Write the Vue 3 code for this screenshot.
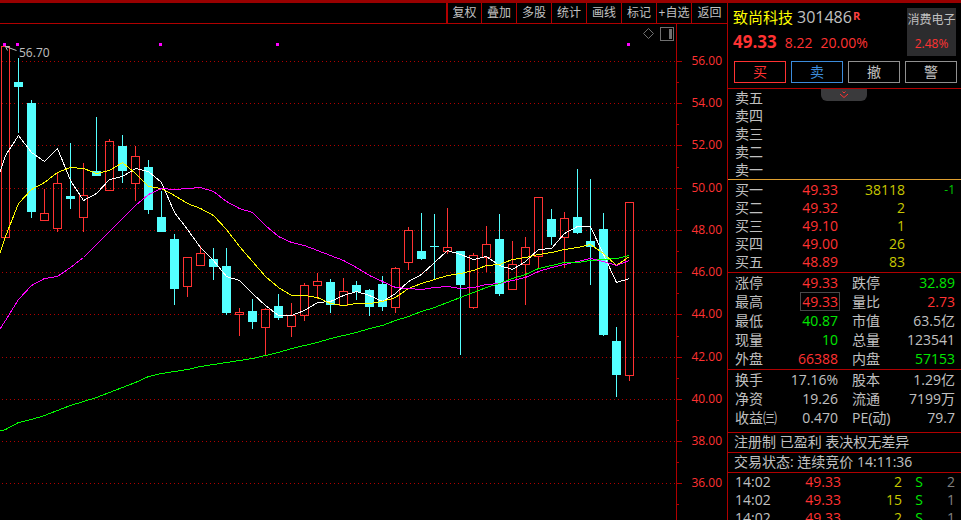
<script setup>
const tools = ['复权', '叠加', '多股', '统计', '画线', '标记', '+自选', '返回']

const majorTicks = [
  [61, '56.00'], [103, '54.00'], [145, '52.00'], [188, '50.00'], [230, '48.00'], [272, '46.00'],
  [314, '44.00'], [357, '42.00'], [399, '40.00'], [441, '38.00'], [483, '36.00'],
]
const minorTicks = [82, 124, 167, 209, 251, 293, 336, 378, 420, 462, 504]

// Each bar: direction, then the rows of high, body top, body bottom and low.
const bars = [
  ['u', 46, 46, 238, 238], ['d', 58, 82, 87, 133], ['d', 100, 103, 212, 218], ['u', 189, 213, 221, 221],
  ['u', 172, 183, 229, 232], ['d', 143, 196, 199, 209], ['u', 163, 195, 218, 232], ['d', 117, 171, 176, 176],
  ['u', 139, 141, 191, 191], ['d', 135, 146, 171, 183], ['u', 146, 156, 184, 201], ['d', 160, 167, 210, 214],
  ['d', 191, 217, 232, 232], ['d', 234, 239, 289, 305], ['u', 257, 257, 287, 297], ['u', 246, 253, 266, 266],
  ['d', 248, 259, 267, 280], ['d', 248, 266, 313, 315], ['u', 308, 312, 315, 336], ['d', 299, 311, 322, 329],
  ['u', 308, 309, 328, 355], ['d', 294, 306, 318, 320], ['u', 303, 315, 327, 337], ['u', 283, 285, 316, 321],
  ['u', 273, 281, 286, 299], ['d', 279, 282, 305, 313], ['u', 278, 291, 306, 306], ['d', 281, 285, 292, 300],
  ['d', 289, 290, 307, 316], ['d', 276, 284, 307, 311], ['u', 267, 268, 308, 313], ['u', 227, 230, 263, 270],
  ['d', 213, 251, 259, 260], ['d', 214, 246, 247, 279], ['u', 208, 247, 252, 254], ['d', 251, 251, 285, 355],
  ['u', 253, 255, 308, 309], ['u', 226, 244, 258, 272], ['d', 214, 239, 294, 296], ['u', 241, 264, 290, 290],
  ['u', 237, 247, 265, 305], ['u', 197, 197, 257, 269], ['d', 209, 219, 237, 245], ['u', 212, 218, 238, 268],
  ['d', 169, 217, 233, 234], ['d', 179, 241, 247, 285], ['d', 213, 229, 335, 336], ['d', 327, 341, 375, 397],
  ['u', 202, 202, 376, 381],
].map(([dir, high, top, bottom, low], i) => ({ up: dir === 'u', high, top, bottom, low, x: 5 + 13 * i }))

const markers = [3, 16, 159, 276, 627]

const series = (first, ys) => [`0,${first}`, ...ys.map((y, i) => `${5.5 + 13 * i},${y + 0.5}`)].join(' ')

const averages = [
  { name: 'ma5', points: series(172, [155, 135, 152, 161, 148, 180, 200, 193, 179, 176, 168, 171, 182, 212, 229, 247, 260, 276, 280, 293, 305, 315, 315, 310, 302, 301, 295, 291, 295, 301, 293, 281, 274, 262, 250, 254, 259, 256, 265, 269, 261, 249, 248, 233, 226, 226, 254, 282, 278]) },
  { name: 'ma10', points: series(253, [236, 203, 189, 182, 172, 167, 168, 173, 170, 162, 173, 186, 188, 195, 203, 208, 215, 229, 246, 261, 276, 287, 295, 295, 297, 303, 305, 303, 303, 301, 297, 288, 283, 279, 275, 273, 270, 265, 264, 259, 257, 254, 252, 249, 247, 244, 253, 265, 256]) },
  { name: 'ma20', points: series(329, [320, 299, 285, 278, 276, 267, 257, 244, 231, 218, 205, 194, 188, 189, 188, 187, 191, 201, 208, 212, 225, 236, 242, 245, 250, 255, 260, 267, 275, 281, 287, 288, 289, 287, 286, 288, 287, 284, 283, 280, 277, 271, 267, 264, 261, 258, 261, 265, 260]) },
  { name: 'ma60', points: series(431, [429, 422, 419, 415, 410, 405, 401, 397, 392, 387, 382, 376, 373, 371, 369, 366, 364, 362, 360, 358, 355, 352, 348, 345, 342, 338, 335, 332, 328, 325, 320, 316, 311, 307, 302, 297, 292, 287, 283, 278, 274, 268, 265, 262, 262, 260, 259, 258, 255]) },
]

const actions = [
  { text: '买', tone: 'buy' },
  { text: '卖', tone: 'sell' },
  { text: '撤', tone: 'plain' },
  { text: '警', tone: 'plain' },
]

const asks = ['卖五', '卖四', '卖三', '卖二', '卖一']
const bids = [
  ['买一', '49.33', '38118', '-1'],
  ['买二', '49.32', '2', ''],
  ['买三', '49.10', '1', ''],
  ['买四', '49.00', '26', ''],
  ['买五', '48.89', '83', ''],
]

const quotes = [
  ['涨停', '49.33', 'red'], ['跌停', '32.89', 'green'],
  ['最高', '49.33', 'red boxed'], ['量比', '2.73', 'red'],
  ['最低', '40.87', 'green'], ['市值', '63.5亿', ''],
  ['现量', '10', 'green'], ['总量', '123541', ''],
  ['外盘', '66388', 'red'], ['内盘', '57153', 'green'],
]
const basics = [
  ['换手', '17.16%'], ['股本', '1.29亿'],
  ['净资', '19.26'], ['流通', '7199万'],
  ['收益㈢', '0.470'], ['PE(动)', '79.7'],
]
const trades = [
  ['14:02', '49.33', '2', 'S', '2'],
  ['14:02', '49.33', '15', 'S', '1'],
  ['14:02', '49.33', '2', 'S', '1'],
]
</script>

<template>
  <div class="terminal">
    <main class="left">
      <nav class="toolbar">
        <button v-for="t in tools" :key="t" type="button">{{ t }}</button>
      </nav>
      <svg class="chart" viewBox="0 24 727 496" role="img" aria-label="K线图">
        <g class="grid">
          <line v-for="[y] in majorTicks" :key="y" x1="2" x2="676" :y1="y + 0.5" :y2="y + 0.5" />
        </g>
        <g class="axis">
          <rect x="676" y="24" width="1" height="496" />
          <rect v-for="[y] in majorTicks" :key="y" x="677" :y="y" width="5" height="1" />
          <rect v-for="y in minorTicks" :key="y" x="677" :y="y" width="2" height="1" />
        </g>
        <g class="scale">
          <text v-for="[y, label] in majorTicks" :key="y" x="722" :y="y + 4">{{ label }}</text>
        </g>
        <g v-for="b in bars" :key="b.x" :class="b.up ? 'rise' : 'fall'">
          <template v-if="b.up">
            <rect v-if="b.top > b.high" class="wick" :x="b.x" :y="b.high" width="1" :height="b.top - b.high" />
            <rect v-if="b.low > b.bottom" class="wick" :x="b.x" :y="b.bottom" width="1" :height="b.low - b.bottom" />
            <rect class="body" :x="b.x - 3.5" :y="b.top + 0.5" width="8" :height="b.bottom - b.top - 1" />
          </template>
          <template v-else>
            <rect :x="b.x" :y="b.high" width="1" :height="b.low - b.high" />
            <rect :x="b.x - 4" :y="b.top" width="9" :height="b.bottom - b.top" />
          </template>
        </g>
        <polyline v-for="a in averages" :key="a.name" class="average" :class="a.name" :points="a.points" />
        <g class="peak">
          <path d="M16.5 50.5L5.5 46.500M5.500 46.500h4M5.500 46.500l2 4" />
          <text x="19" y="57">56.70</text>
        </g>
        <rect v-for="x in markers" :key="x" class="marker" :x="x" y="43" width="3" height="3" />
        <g class="glyphs">
          <path d="M648.5 28.5l5 5-5 5-5-5z" />
          <rect class="frame" x="660.5" y="27.5" width="13" height="13" />
          <rect class="fill" x="669" y="29" width="3" height="10" />
        </g>
      </svg>
    </main>

    <aside class="panel">
      <header class="head">
        <div class="summary">
          <div>
            <h1><span class="name">致尚科技</span><span class="code">301486</span><sup>R</sup></h1>
            <p class="price"><strong>49.33</strong><span>8.22</span><span>20.00%</span></p>
          </div>
          <a class="sector" href="#"><span>消费电子</span><span class="red">2.48%</span></a>
        </div>
        <div class="actions">
          <button v-for="a in actions" :key="a.text" type="button" :class="a.tone">{{ a.text }}</button>
        </div>
      </header>

      <section class="asks">
        <button class="expand" type="button" aria-label="展开">
          <svg viewBox="0 0 10 8"><path d="M3.5 .5L5 2L6.5 .5M1 3L5 6.500L9 3" /></svg>
        </button>
        <table class="book">
          <tbody>
            <tr v-for="a in asks" :key="a"><th scope="row">{{ a }}</th></tr>
          </tbody>
        </table>
      </section>

      <section class="bids">
        <table class="book">
          <tbody>
            <tr v-for="[label, price, volume, change] in bids" :key="label">
              <th scope="row">{{ label }}</th>
              <td class="red">{{ price }}</td>
              <td class="volume">{{ volume }}</td>
              <td class="change">{{ change }}</td>
            </tr>
          </tbody>
        </table>
      </section>

      <dl class="facts">
        <div v-for="[label, value, tone] in quotes" :key="label">
          <dt>{{ label }}</dt><dd :class="tone">{{ value }}</dd>
        </div>
      </dl>
      <dl class="facts basics">
        <div v-for="[label, value] in basics" :key="label">
          <dt>{{ label }}</dt><dd>{{ value }}</dd>
        </div>
      </dl>

      <p class="note">注册制 已盈利 表决权无差异</p>
      <p class="note">交易状态: 连续竞价 14:11:36</p>

      <table class="trades">
        <tbody>
          <tr v-for="([time, price, volume, side, count], i) in trades" :key="i">
            <td>{{ time }}</td>
            <td class="red">{{ price }}</td>
            <td class="volume">{{ volume }}</td>
            <td class="side">{{ side }}</td>
            <td class="count">{{ count }}</td>
          </tr>
        </tbody>
      </table>
    </aside>
  </div>
</template>

<style>
body {
  background: #000;
}
</style>

<style scoped>
.terminal {
  display: flex;
  height: 100vh;
  box-sizing: border-box;
  overflow: hidden;
  border-top: 3px solid #980000;
  background: #000;
  color: #c0c0c0;
  font: 14px/18px "Open Sans", "Noto Sans CJK SC", sans-serif;
}
button {
  margin: 0;
  padding: 0;
  border: 0;
  background: none;
  color: inherit;
  font: inherit;
  cursor: pointer;
}
h1, p, dl, dd {
  margin: 0;
}
.red { color: #ff3232; }
.green { color: #00e600; }

.left {
  flex: 1;
  min-width: 0;
  border-right: 1px solid #b00000;
}
.toolbar {
  display: flex;
  justify-content: flex-end;
  height: 20px;
  border-bottom: 1px solid #b00000;
}
.toolbar button {
  width: 35px;
  box-sizing: border-box;
  border-left: 1px solid #b00000;
  font-size: 12px;
  line-height: 20px;
  white-space: nowrap;
}
.toolbar button:first-child {
  border-left-width: 2px;
}
.toolbar button:last-child {
  width: 36px;
}
.chart {
  display: block;
  width: 100%;
  font-size: 12px;
}
.grid line {
  stroke: #b00000;
  stroke-dasharray: 1 3;
}
.axis { fill: #b00000; }
.scale text {
  fill: #ff3232;
  text-anchor: end;
}
.rise .body {
  fill: none;
  stroke: #ff3232;
}
.rise .wick { fill: #ff3232; }
.fall { fill: #54ffff; }
.average {
  fill: none;
  stroke-width: 1;
  shape-rendering: crispEdges;
}
.ma5 { stroke: #fff; }
.ma10 { stroke: #ff0; }
.ma20 { stroke: #f0f; }
.ma60 { stroke: #0f0; }
.peak path {
  fill: none;
  stroke: #c0c0c0;
}
.peak text { fill: #c0c0c0; }
.marker { fill: #f0f; }
.glyphs {
  fill: none;
  stroke: #707070;
}
.glyphs .fill {
  fill: #707070;
  stroke: none;
}

.panel {
  flex: 0 0 233px;
  min-width: 0;
}
.head {
  padding: 5px 4px 5px 5px;
}
.summary {
  display: flex;
  justify-content: space-between;
  padding-right: 1px;
}
h1 {
  display: flex;
  font-size: 15px;
  font-weight: 400;
  line-height: 18px;
}
.name { color: #ff0; }
.code {
  margin-left: 4px;
  font-size: 16px;
}
sup {
  margin-left: 1px;
  color: #ff4040;
  font-size: 11px;
  font-weight: 700;
  line-height: 16px;
}
.price {
  display: flex;
  align-items: baseline;
  gap: 8px;
  padding-top: 4px;
  color: #ff3232;
  line-height: 24px;
}
.price strong { font-size: 17px; }
.sector {
  display: flex;
  flex-direction: column;
  width: 49px;
  height: 48px;
  background: #2c2c2e;
  color: inherit;
  font-size: 12px;
  line-height: 24px;
  text-align: center;
  text-decoration: none;
  white-space: nowrap;
}
.actions {
  display: grid;
  grid-template-columns: repeat(4, 1fr);
  gap: 5px;
  margin-top: 5px;
  padding-left: 1px;
}
.actions button {
  height: 22px;
  border: 1px solid #909090;
  line-height: 20px;
}
.actions .buy {
  border-color: #ff3232;
  color: #ff3232;
}
.actions .sell {
  border-color: #3c8cdc;
  color: #3c8cdc;
}

.asks {
  position: relative;
  border-top: 1px solid #b00000;
  border-bottom: 1px solid #e0a030;
}
.expand {
  position: absolute;
  top: 0;
  left: 50%;
  width: 46px;
  height: 12px;
  margin-left: -24px;
  border-radius: 0 0 6px 6px;
  background: #3a3a3c;
}
.expand svg {
  display: block;
  width: 10px;
  height: 8px;
  margin: 0 auto;
  fill: none;
  stroke: #ff3232;
}
.bids {
  padding: 1px 0;
}
table {
  width: 100%;
  border-collapse: collapse;
  table-layout: fixed;
}
th, td {
  height: 18px;
  padding: 0;
  font-weight: 400;
  line-height: 18px;
  text-align: right;
}
th, .trades td:first-child {
  padding-left: 7px;
  text-align: left;
}
.book th { width: 43px; }
.book .red { width: 60px; }
.book .volume { width: 67px; }
.volume { color: #c8c800; }
.change {
  padding-right: 6px;
  color: #00c800;
  font-size: 12px;
}

.facts {
  display: grid;
  grid-template-columns: 1fr 1fr;
  column-gap: 14px;
  padding: 0 6px 1px 7px;
  border-top: 1px solid #b00000;
  line-height: 19px;
}
.facts div {
  display: flex;
  justify-content: space-between;
  height: 19px;
}
.basics { padding-bottom: 5px; }
.boxed {
  height: 17px;
  margin: 1px -1px 0 0;
  padding: 0 1px;
  outline: 1px solid #484848;
  line-height: 17px;
}
.note {
  padding: 0 0 1px 6px;
  border-top: 1px solid #b00000;
  line-height: 18px;
  white-space: nowrap;
}
.trades {
  border-top: 1px solid #b00000;
}
.trades td:first-child { width: 46px; }
.trades .red { width: 60px; }
.trades .volume { width: 61px; }
.side {
  width: 21px;
  color: #00e600;
}
.count {
  padding-right: 6px;
  color: #808080;
}
</style>
